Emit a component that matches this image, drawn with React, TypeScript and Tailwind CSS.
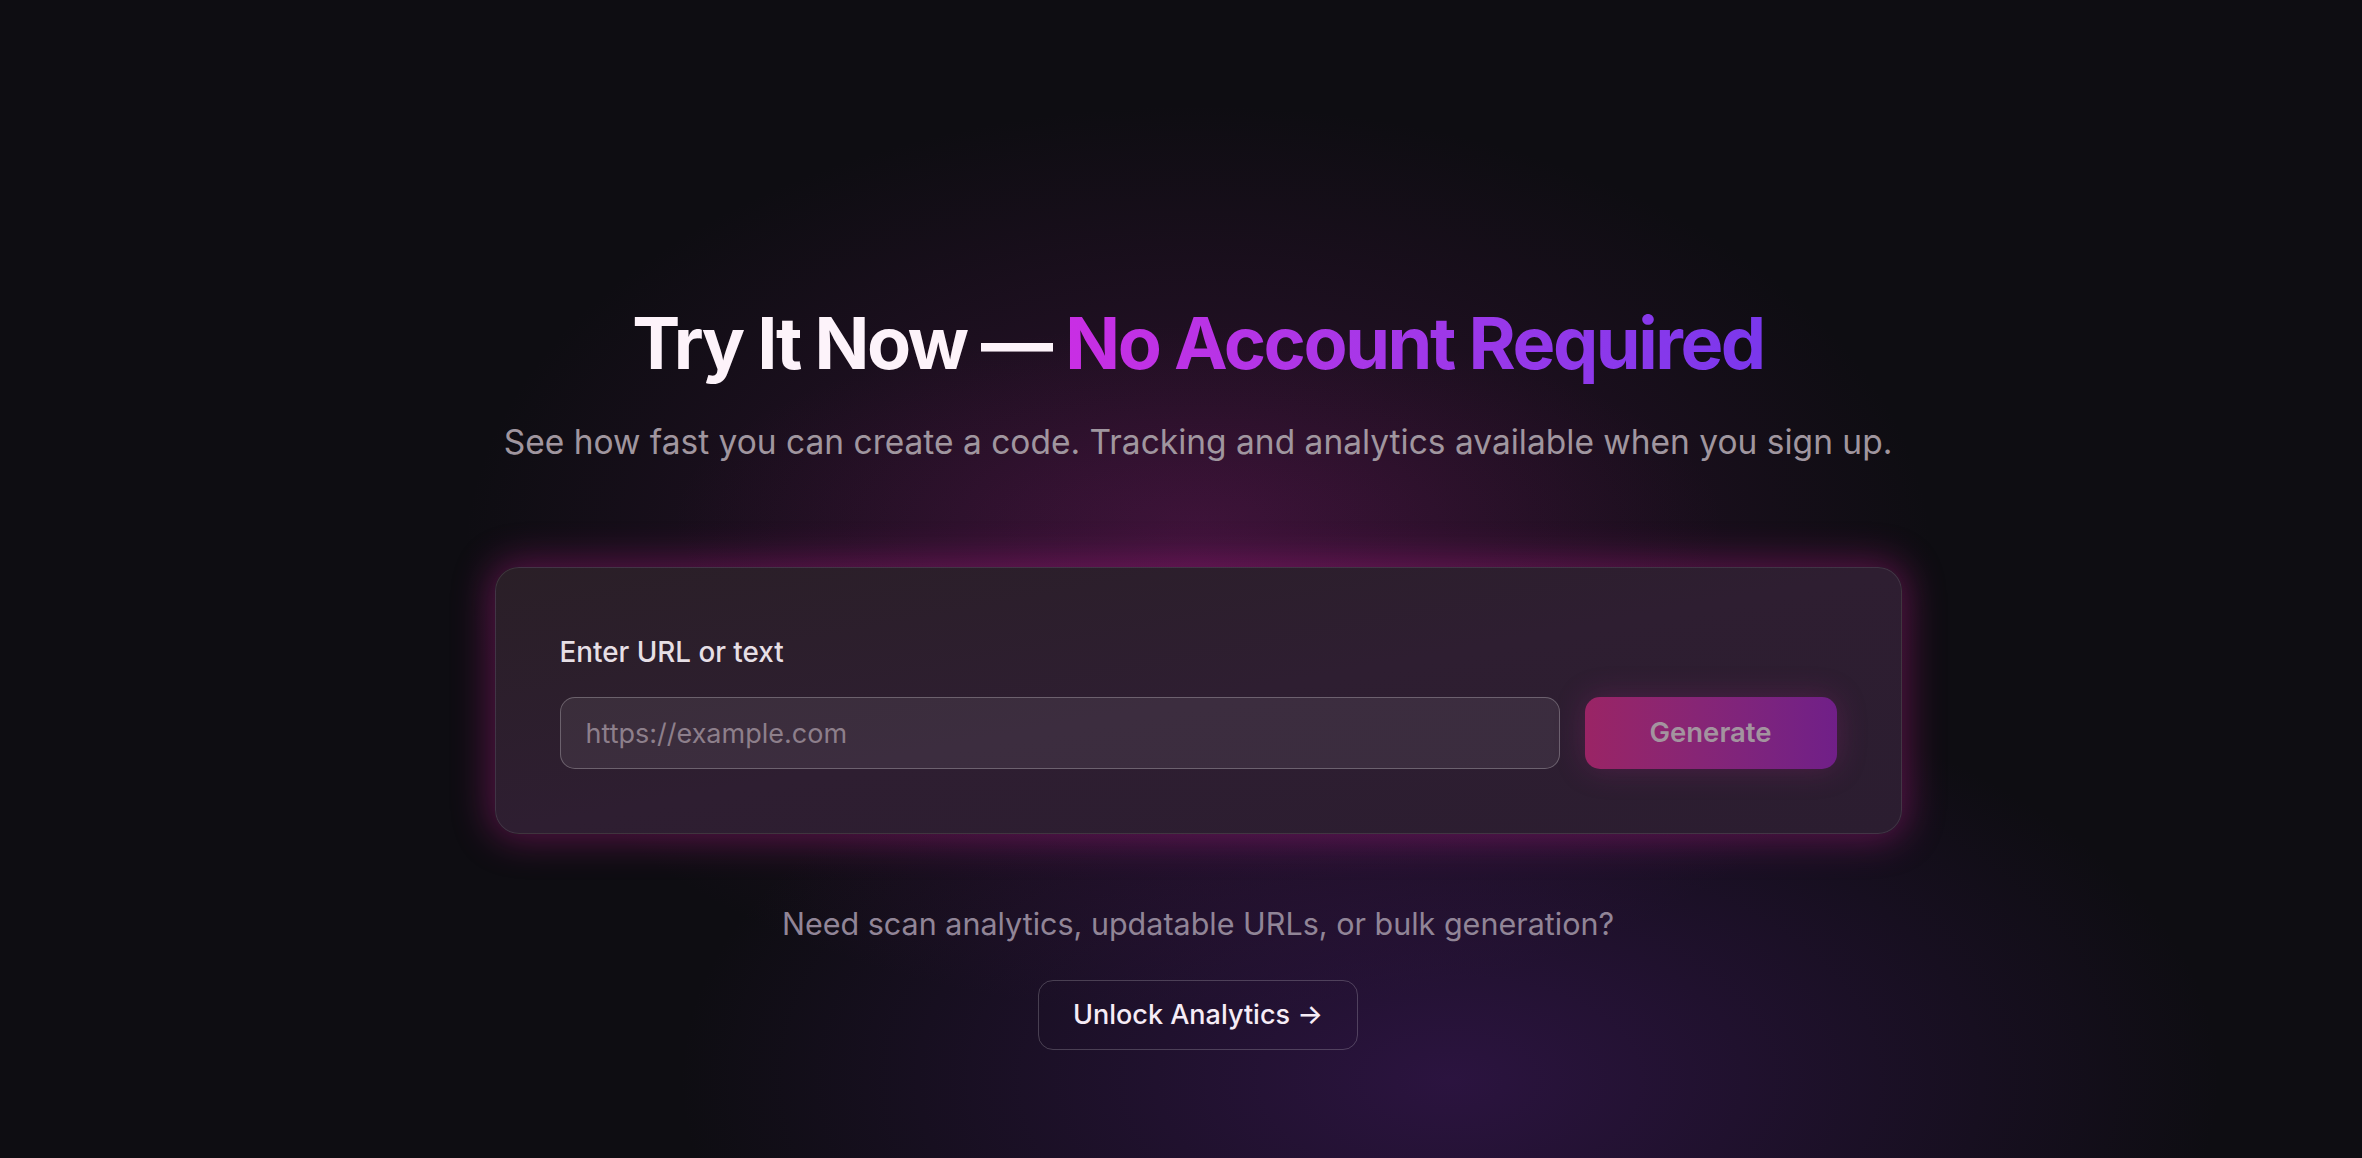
export default function App() {
  return (
    <div className="relative min-h-screen w-full overflow-hidden bg-[#0e0d12] font-['Inter',sans-serif]">
      {/* background glows */}
      <div className="pointer-events-none absolute inset-0 bg-[radial-gradient(ellipse_1050px_650px_at_1198px_560px,rgba(80,22,78,0.5),transparent_70%)]" />
      <div className="pointer-events-none absolute inset-0 bg-[radial-gradient(ellipse_700px_260px_at_1198px_520px,rgba(120,25,95,0.22),transparent_75%)]" />
      <div className="pointer-events-none absolute inset-0 bg-[radial-gradient(ellipse_1100px_600px_at_1450px_1080px,rgba(72,26,108,0.5),transparent_70%)]" />

      <div className="relative flex flex-col items-center pt-[307px] pl-[34px]">
        <h1 className="text-[72px] font-bold leading-[72px] tracking-[-0.034em] text-[#fdf3fa]">
          Try It Now —{" "}
          <span className="bg-gradient-to-r from-[#c92ee4] to-[#7a37ec] bg-clip-text text-transparent">
            No Account Required
          </span>
        </h1>
        <p className="mt-[38px] text-[33.5px] leading-[50px] text-[#a0969f]">
          See how fast you can create a code. Tracking and analytics available when you sign up.
        </p>

        <div className="mt-[100px] w-[1407px] rounded-[24px] border-[1.5px] border-white/10 bg-gradient-to-br from-[#2a1f27] via-[#2e1e31] to-[#2b1d30] p-[64px] shadow-[0_0_36px_6px_rgba(200,30,150,0.38)]">
          <label className="block text-[27.8px] font-medium leading-[40px] text-[#e6dfe5]">
            Enter URL or text
          </label>
          <div className="mt-[25px] flex gap-[25px]">
            <input
              placeholder="https://example.com"
              className="h-[72px] flex-1 rounded-[15px] border-[1.5px] border-white/25 bg-white/[0.07] px-[25px] text-[27px] text-white outline-none placeholder:text-[#8d7f8b]"
            />
            <button className="h-[72px] w-[252px] rounded-[15px] bg-gradient-to-r from-[#9a2465] to-[#701f88] text-[27.5px] font-semibold text-[#a3949f] shadow-[0_0_30px_rgba(180,40,140,0.25)]">
              Generate
            </button>
          </div>
        </div>

        <p className="mt-[68px] text-[30.5px] leading-[44px] text-[#918597]">
          Need scan analytics, updatable URLs, or bulk generation?
        </p>
        <button className="mt-[34px] h-[70px] rounded-[15px] border-[1.5px] border-white/20 px-[34px] text-[27px] font-medium text-[#f6ecf6]">
          Unlock Analytics →
        </button>
      </div>
    </div>
  );
}
